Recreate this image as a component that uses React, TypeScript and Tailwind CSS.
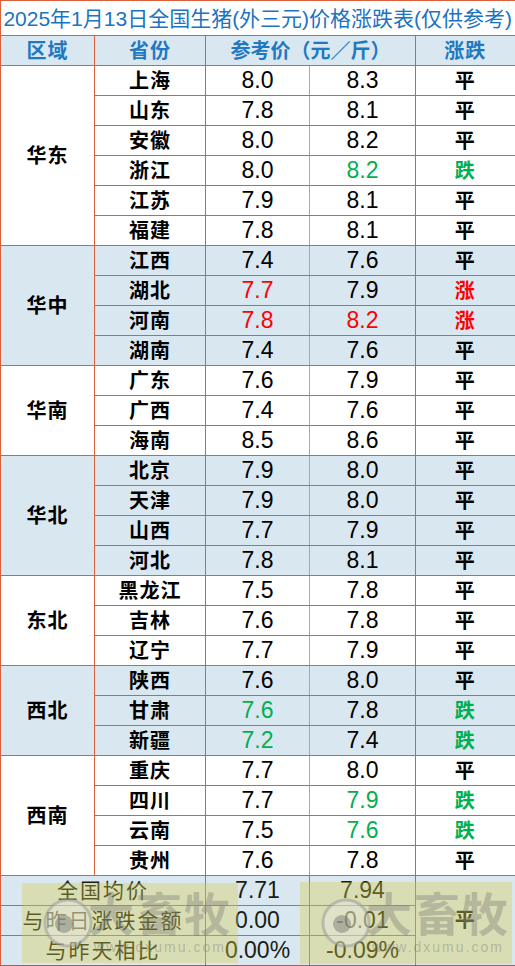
import React from "react";

type Tone = "k" | "r" | "g";

interface Row {
  name: string;
  a: string;
  b: string;
  t: string;
  ca?: Tone;
  cb?: Tone;
  ct?: Tone;
}

interface Group {
  region: string;
  shaded: boolean;
  rows: Row[];
}

const groups: Group[] = [
  {
    region: "华东",
    shaded: false,
    rows: [
      { name: "上海", a: "8.0", b: "8.3", t: "平" },
      { name: "山东", a: "7.8", b: "8.1", t: "平" },
      { name: "安徽", a: "8.0", b: "8.2", t: "平" },
      { name: "浙江", a: "8.0", b: "8.2", t: "跌", cb: "g", ct: "g" },
      { name: "江苏", a: "7.9", b: "8.1", t: "平" },
      { name: "福建", a: "7.8", b: "8.1", t: "平" },
    ],
  },
  {
    region: "华中",
    shaded: true,
    rows: [
      { name: "江西", a: "7.4", b: "7.6", t: "平" },
      { name: "湖北", a: "7.7", b: "7.9", t: "涨", ca: "r", ct: "r" },
      { name: "河南", a: "7.8", b: "8.2", t: "涨", ca: "r", cb: "r", ct: "r" },
      { name: "湖南", a: "7.4", b: "7.6", t: "平" },
    ],
  },
  {
    region: "华南",
    shaded: false,
    rows: [
      { name: "广东", a: "7.6", b: "7.9", t: "平" },
      { name: "广西", a: "7.4", b: "7.6", t: "平" },
      { name: "海南", a: "8.5", b: "8.6", t: "平" },
    ],
  },
  {
    region: "华北",
    shaded: true,
    rows: [
      { name: "北京", a: "7.9", b: "8.0", t: "平" },
      { name: "天津", a: "7.9", b: "8.0", t: "平" },
      { name: "山西", a: "7.7", b: "7.9", t: "平" },
      { name: "河北", a: "7.8", b: "8.1", t: "平" },
    ],
  },
  {
    region: "东北",
    shaded: false,
    rows: [
      { name: "黑龙江", a: "7.5", b: "7.8", t: "平" },
      { name: "吉林", a: "7.6", b: "7.8", t: "平" },
      { name: "辽宁", a: "7.7", b: "7.9", t: "平" },
    ],
  },
  {
    region: "西北",
    shaded: true,
    rows: [
      { name: "陕西", a: "7.6", b: "8.0", t: "平" },
      { name: "甘肃", a: "7.6", b: "7.8", t: "跌", ca: "g", ct: "g" },
      { name: "新疆", a: "7.2", b: "7.4", t: "跌", ca: "g", ct: "g" },
    ],
  },
  {
    region: "西南",
    shaded: false,
    rows: [
      { name: "重庆", a: "7.7", b: "8.0", t: "平" },
      { name: "四川", a: "7.7", b: "7.9", t: "跌", cb: "g", ct: "g" },
      { name: "云南", a: "7.5", b: "7.6", t: "跌", cb: "g", ct: "g" },
      { name: "贵州", a: "7.6", b: "7.8", t: "平" },
    ],
  },
];

const toneClass: Record<Tone, string> = {
  k: "text-black",
  r: "text-[#ff0000]",
  g: "text-[#00b050]",
};

const cjk = { fontFamily: '"Liberation Sans", "Noto Sans CJK SC", sans-serif' };

const cell = "border border-[#d9603a] p-0 text-center align-middle";
const num = "text-[23px] leading-none";
const zh = "text-[20px] font-bold leading-none tracking-[1px]";

function Watermark({ left, top, width, height }: { left: number; top: number; width: number; height: number }) {
  return (
    <div
      className="pointer-events-none absolute overflow-hidden bg-[rgba(214,206,70,0.36)]"
      style={{ left, top, width, height }}
    >
      <div className="flex h-full items-center pl-[20px]">
        <svg width="52" height="52" viewBox="0 0 52 52" className="shrink-0">
          <circle cx="26" cy="26" r="23" fill="rgba(235,235,235,0.4)" stroke="rgba(150,150,150,0.5)" strokeWidth="3" />
          <circle cx="22" cy="27" r="9" fill="rgba(110,110,110,0.45)" />
        </svg>
        <div className="-ml-[6px] flex flex-col items-center">
          <span className="text-[46px] font-bold leading-none tracking-[2px] text-[rgba(120,120,120,0.4)]">大畜牧</span>
          <span className="mt-[2px] text-[14px] leading-none tracking-[2px] text-[rgba(120,120,120,0.4)]">www.dxumu.com</span>
        </div>
      </div>
    </div>
  );
}

export default function App() {
  return (
    <div className="relative h-[966px] w-[515px] overflow-hidden bg-white" style={cjk}>
      <table className="w-[515px] table-fixed border-collapse border-t border-l border-r-2 border-b-2 border-[#c8562a]">
        <colgroup>
          <col className="w-[94px]" />
          <col className="w-[111px]" />
          <col className="w-[104px]" />
          <col className="w-[106px]" />
          <col className="w-[100px]" />
        </colgroup>
        <thead>
          <tr className="h-[35px]">
            <th colSpan={5} className={`${cell} bg-white text-[21px] font-normal leading-none text-[#1a74bf]`}>
              2025年1月13日全国生猪(外三元)价格涨跌表(仅供参考)
            </th>
          </tr>
          <tr className="h-[30px] bg-[#d9e7f1] text-[#1f79c2]">
            <th className={`${cell} ${zh}`}>区域</th>
            <th className={`${cell} ${zh}`}>省份</th>
            <th colSpan={2} className={`${cell} text-[20px] font-bold leading-none`}>
              参考价（元／斤）
            </th>
            <th className={`${cell} ${zh}`}>涨跌</th>
          </tr>
        </thead>
        <tbody>
          {groups.map((g) =>
            g.rows.map((r, i) => (
              <tr key={g.region + r.name} className={`h-[30px] ${g.shaded ? "bg-[#d9e7f1]" : "bg-white"}`}>
                {i === 0 && (
                  <td rowSpan={g.rows.length} className={`${cell} ${zh} text-black`}>
                    {g.region}
                  </td>
                )}
                <td className={`${cell} ${zh} text-black`}>{r.name}</td>
                <td className={`${cell} ${num} border-r-[#ee9a3a] ${toneClass[r.ca ?? "k"]}`}>{r.a}</td>
                <td className={`${cell} ${num} border-l-[#ee9a3a] ${toneClass[r.cb ?? "k"]}`}>{r.b}</td>
                <td className={`${cell} ${zh} ${toneClass[r.ct ?? "k"]}`}>{r.t}</td>
              </tr>
            ))
          )}
          <tr className="h-[30px] bg-[#d9e7f1] text-[#1c1c10]">
            <td colSpan={2} className={`${cell} text-[21px] leading-none tracking-[2px]`}>全国均价</td>
            <td className={`${cell} ${num}`}>7.71</td>
            <td className={`${cell} ${num}`}>7.94</td>
            <td rowSpan={3} className={`${cell} ${zh}`}>平</td>
          </tr>
          <tr className="h-[30px] bg-[#d9e7f1] text-[#1c1c10]">
            <td colSpan={2} className={`${cell} text-[21px] leading-none tracking-[2px]`}>与昨日涨跌金额</td>
            <td className={`${cell} ${num}`}>0.00</td>
            <td className={`${cell} ${num}`}>-0.01</td>
          </tr>
          <tr className="h-[30px] bg-[#d9e7f1] text-[#1c1c10]">
            <td colSpan={2} className={`${cell} text-[21px] leading-none tracking-[2px]`}>与昨天相比</td>
            <td className={`${cell} ${num}`}>0.00%</td>
            <td className={`${cell} ${num}`}>-0.09%</td>
          </tr>
        </tbody>
      </table>
      <Watermark left={22} top={883} width={216} height={80} />
      <Watermark left={300} top={882} width={212} height={82} />
    </div>
  );
}
